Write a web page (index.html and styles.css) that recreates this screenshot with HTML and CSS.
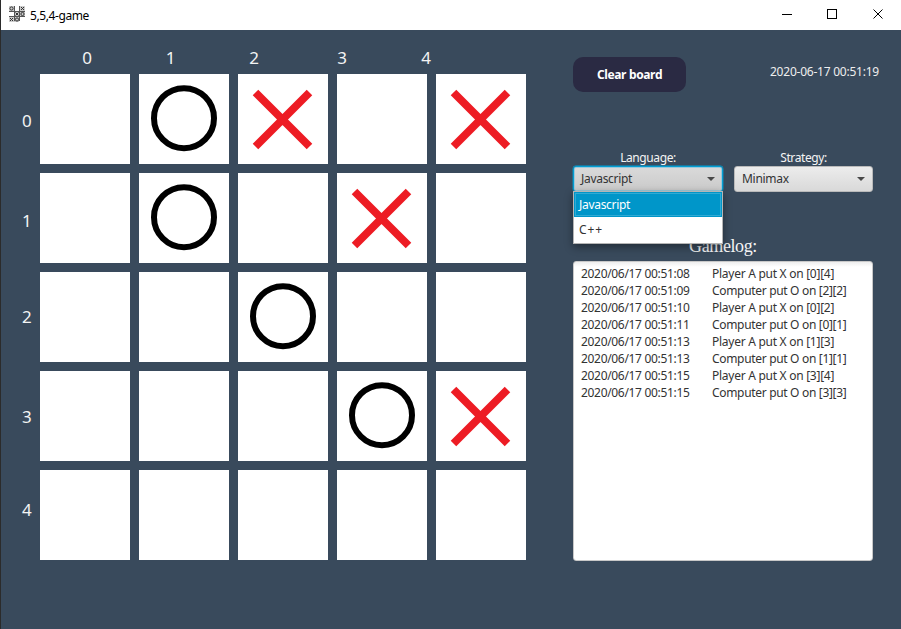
FILE: index.html
```
<!DOCTYPE html>
<html lang="en">
<head>
<meta charset="utf-8">
<title>5,5,4-game</title>
<link rel="stylesheet" href="styles.css">
</head>
<body>
<svg class="defs" width="0" height="0">
  <symbol id="o" viewBox="0 0 90 90"><circle cx="45" cy="44.200" r="30" fill="none" stroke="#000" stroke-width="6"/></symbol>
  <symbol id="x" viewBox="0 0 90 90"><path d="M17.5 18.5L71.5 72.5M71.5 18.5L17.5 72.5" stroke="#ed1c24" stroke-width="7.8"/></symbol>
</svg>
<div class="window">
  <header class="titlebar">
    <svg class="app-icon" width="16" height="16" viewBox="0 0 16 16" fill="none" stroke="#333">
      <path d="M0 0H5V5H0ZM11 0H16V5H11ZM6 6H16V10H6ZM0 11H10V16H0Z" fill="#ccc" stroke="none"/>
      <path d="M5.500 0V15M10.500 0V15M0 5.500H16M0 10.500H16" stroke="#555"/>
      <path d="M12 1L15 4M15 1L12 4M6.500 6.500L9.500 9.500M9.500 6.500L6.500 9.500M1 12L4 15M4 12L1 15"/>
      <circle cx="2.500" cy="2.500" r="1.600"/><circle cx="13.500" cy="8" r="1.600"/><circle cx="8" cy="13.500" r="1.600"/>
    </svg>
    <span class="title">5,5,4-game</span>
    <svg class="controls" width="138" height="30" fill="none" stroke="#000">
      <path d="M19 14.500H29"/><rect x="64.500" y="9.500" width="9" height="9"/><path d="M110.500 9.500L119.500 18.500M119.500 9.500L110.500 18.500"/>
    </svg>
  </header>
  <main class="content">
    <section class="game">
      <div class="cols"><span>0</span><span>1</span><span>2</span><span>3</span><span>4</span></div>
      <div class="rows"><span>0</span><span>1</span><span>2</span><span>3</span><span>4</span></div>
      <div class="board">
        <svg></svg><svg><use href="#o"/></svg><svg><use href="#x"/></svg><svg></svg><svg><use href="#x"/></svg>
        <svg></svg><svg><use href="#o"/></svg><svg></svg><svg><use href="#x"/></svg><svg></svg>
        <svg></svg><svg></svg><svg><use href="#o"/></svg><svg></svg><svg></svg>
        <svg></svg><svg></svg><svg></svg><svg><use href="#o"/></svg><svg><use href="#x"/></svg>
        <svg></svg><svg></svg><svg></svg><svg></svg><svg></svg>
      </div>
    </section>
    <aside class="side">
      <div class="top">
        <button class="clear">Clear board</button>
        <time class="clock">2020-06-17 00:51:19</time>
      </div>
      <div class="pickers">
        <div class="field language">
          <span class="label">Language:</span>
          <div class="combo focused"><span class="value">Javascript</span><i class="arrow"></i></div>
          <div class="popup">
            <div class="option selected">Javascript</div>
            <div class="option cpp">C++</div>
          </div>
        </div>
        <div class="field strategy">
          <span class="label">Strategy:</span>
          <div class="combo"><span class="value">Minimax</span><i class="arrow"></i></div>
        </div>
      </div>
      <h2 class="log-title">Gamelog:</h2>
      <div class="log">
        <time>2020/06/17 00:51:08</time><span class="player">Player A put X on [0][4]</span>
        <time>2020/06/17 00:51:09</time><span>Computer put O on [2][2]</span>
        <time>2020/06/17 00:51:10</time><span class="player">Player A put X on [0][2]</span>
        <time>2020/06/17 00:51:11</time><span>Computer put O on [0][1]</span>
        <time>2020/06/17 00:51:13</time><span class="player">Player A put X on [1][3]</span>
        <time>2020/06/17 00:51:13</time><span>Computer put O on [1][1]</span>
        <time>2020/06/17 00:51:15</time><span class="player">Player A put X on [3][4]</span>
        <time>2020/06/17 00:51:15</time><span>Computer put O on [3][3]</span>
      </div>
    </aside>
  </main>
</div>
</body>
</html>
```
FILE: styles.css
```
* { box-sizing: border-box; }
body { margin: 0; font: 12px/17px "Noto Sans", "Open Sans", sans-serif; color: #333; }
.defs { position: absolute; }
.window { width: 901px; height: 629px; display: flex; flex-direction: column; background: #394a5c; border-left: 1px solid #2b2b2b; overflow: hidden; }
.titlebar { height: 30px; flex: none; display: flex; align-items: center; background: #fff; color: #000; padding-left: 8px; }
.app-icon { margin-top: -2px; }
.title { margin: 0 0 0 5px; letter-spacing: -0.4px; white-space: nowrap; }
.controls { margin-left: auto; }
.content { display: flex; flex: 1; }
.game { width: 572px; flex: none; display: grid; grid-template-columns: 39px 486px; grid-template-rows: 44px 486px; color: #f4f4f4; font-size: 17px; }
.cols { grid-column: 2; display: grid; grid-template-columns: 80px 87px 80px 96px 72px; padding: 16px 0 0 7px; text-align: center; line-height: 24px; }
.rows { grid-column: 1; display: grid; grid-template-rows: 92px 108px 84px 116px 70px; align-items: center; padding-left: 21px; }
.board { display: grid; grid-template: repeat(5, 90px) / repeat(5, 90px); gap: 9px; }
.board svg { width: 90px; height: 90px; background: #fff; }
.side { width: 300px; flex: none; }
.top { display: flex; padding-top: 27px; width: 306px; }
.clear { width: 113px; height: 35px; padding: 0; border: 0; border-radius: 10px; background: #2a2a43; color: #fff; font: bold 12px "Noto Sans", sans-serif; letter-spacing: -0.35px; }
.clock { margin: 6px 0 0 auto; color: #eee; letter-spacing: -0.23px; white-space: nowrap; }
.pickers { display: flex; gap: 11px; margin-top: 57px; }
.field { position: relative; display: flex; flex-direction: column; width: 150px; }
.strategy { width: 139px; }
.label { text-align: center; color: #f4f4f4; letter-spacing: -0.4px; height: 17px; }
.combo { height: 26px; display: flex; align-items: center; justify-content: space-between; padding: 0 7px 1px; border: 1px solid #bababa; border-radius: 3px; background: linear-gradient(#ececec, #d9d9d9); letter-spacing: -0.3px; }
.focused { border-color: #039ed3; box-shadow: 0 0 0 .4px #039ed3, inset 0 0 0 1px #9cc9da; background: linear-gradient(#dadada, #cacaca); }
.arrow { border: 4px solid transparent; border-top-color: #484848; border-bottom: 0; }
.popup { position: absolute; z-index: 2; top: 42px; left: 0; width: 150px; height: 53px; background: #fff; border: 1px solid #b5b5b5; box-shadow: 0 3px 8px rgba(0,0,0,.4); }
.option { height: 25px; line-height: 25px; padding-left: 5px; letter-spacing: -0.3px; }
.selected { height: 25px; background: #0096c9; color: #fff; box-shadow: inset 0 0 0 1px #0096c9, inset 0 0 0 2px #30aad4; }
.cpp { letter-spacing: 0.9px; }
.log-title { margin: 44px 0 0; height: 25px; text-align: center; color: #f4f4f4; font: 18px/21px "Liberation Serif", serif; letter-spacing: -0.4px; }
.log { height: 300px; padding: 3px 0 0 7px; border: 1px solid #c8c8c8; border-radius: 3px; background: linear-gradient(#eee, #fff 5px); display: grid; grid-template-columns: 131px 1fr; grid-auto-rows: 17px; letter-spacing: -0.32px; white-space: nowrap; }
.player { letter-spacing: -0.27px; }
```
